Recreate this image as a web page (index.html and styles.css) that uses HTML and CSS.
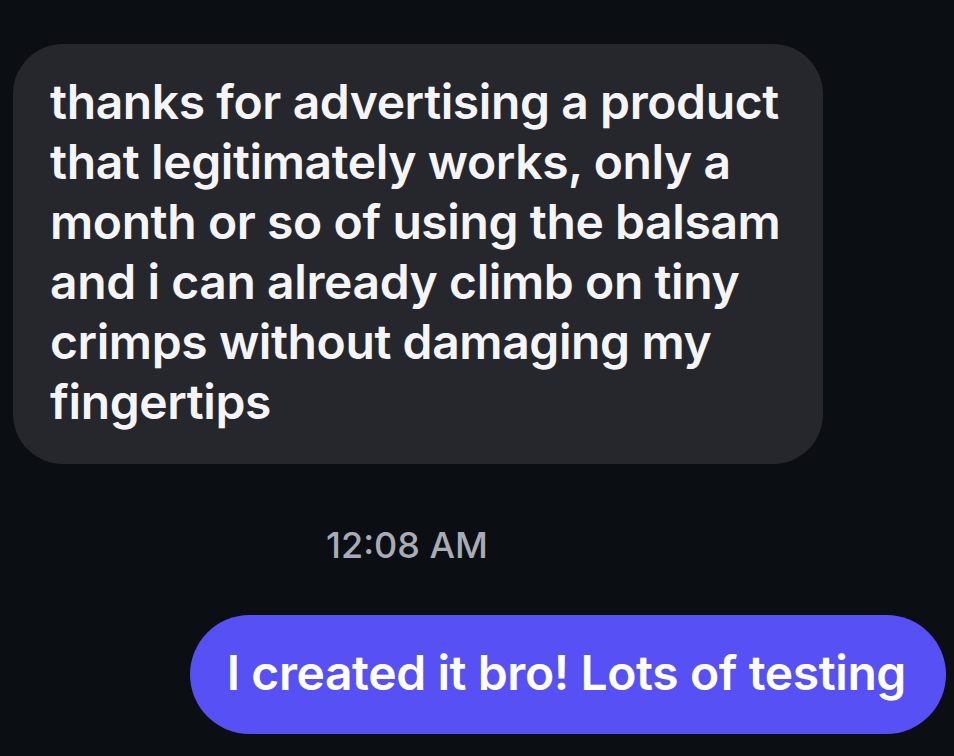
FILE: index.html
```html
<!DOCTYPE html>
<html lang="en">
  <head>
    <meta charset="UTF-8" />
    <meta name="viewport" content="width=device-width, initial-scale=1.0" />
    <title>Messages</title>
    <link rel="stylesheet" href="styles.css">
  </head>
  <body>
    <div class="thread">
      <div class="row row-in">
        <div class="bubble bubble-in">
          thanks for advertising a product that legitimately works, only a
          month or so of using the balsam and i can already climb on tiny
          crimps without damaging my fingertips
        </div>
      </div>

      <div class="timestamp">12:08 AM</div>

      <div class="row row-out">
        <div class="bubble bubble-out">I created it bro! Lots of testing</div>
      </div>
    </div>
  </body>
</html>
```

FILE: styles.css
```css
* {
  margin: 0;
  padding: 0;
  box-sizing: border-box;
}

html,
body {
  height: 100%;
}

body {
  font-family: Inter, "Noto Sans", "Liberation Sans", sans-serif;
  background: #0b0e13;
  color: #f5f5f7;
  overflow: hidden;
}

.thread {
  display: flex;
  flex-direction: column;
  padding: 44px 8px 0 13px;
}

.row {
  display: flex;
}

.row-out {
  justify-content: flex-end;
  margin-top: 52px;
}

.bubble {
  font-size: 48px;
  font-weight: 600;
  letter-spacing: -0.4px;
}

.bubble-in {
  width: 810px;
  background: #25272c;
  border-radius: 50px;
  padding: 28px 37px 32px;
  line-height: 60px;
}

.timestamp {
  padding: 63px 0 0 313px;
  font-size: 36px;
  font-weight: 500;
  color: #a8acb5;
  line-height: 36px;
}

.bubble-out {
  background: #5751f5;
  color: #ffffff;
  border-radius: 60px;
  height: 119px;
  padding: 0 40px 4px 37px;
  display: flex;
  align-items: center;
  white-space: nowrap;
}
```
